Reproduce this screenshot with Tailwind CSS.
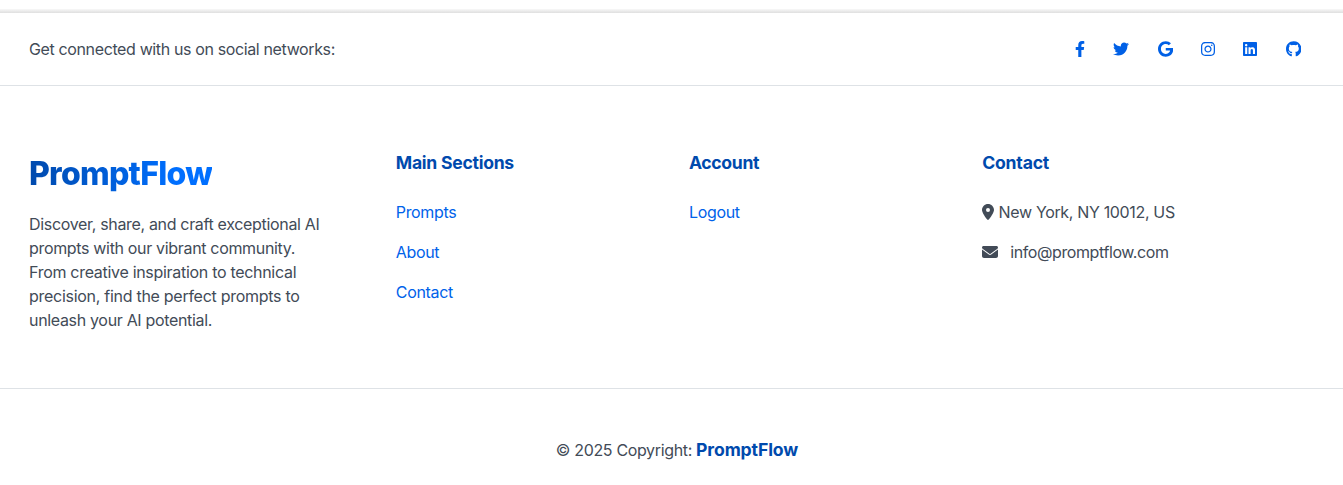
<!DOCTYPE html>
<html lang="en">
<head>
<meta charset="utf-8">
<title>PromptFlow</title>
<script src="https://cdn.jsdelivr.net/npm/@tailwindcss/browser@4"></script>
</head>
<body class="bg-white font-['Inter','Liberation_Sans',sans-serif] text-base leading-6 tracking-[-0.34px] text-[#424b57] h-[485px] overflow-hidden">
<div class="h-[13px] pt-[9px]"><div class="h-1 bg-linear-to-b from-[#f8f8f8] to-[#dfdfdf]"></div></div>
<footer>
  <section class="flex h-[73px] items-center justify-between border-b border-[#dee2e6] pl-[29px] pr-[41.8px]">
    <span class="whitespace-nowrap tracking-[-0.37px]">Get connected with us on social networks:</span>
    <div class="flex items-center gap-[28.25px] text-[#0060e6]">
      <a href="#" aria-label="Facebook"><svg class="h-4 w-[10px] fill-current" viewBox="0 0 320 512"><path d="M279.14 288l14.22-92.66h-88.91v-60.13c0-25.35 12.42-50.06 52.24-50.06h40.42V6.26S260.43 0 225.36 0c-73.22 0-121.08 44.38-121.08 124.72v70.62H22.89V288h81.39v224h100.17V288z"/></svg></a>
      <a href="#" aria-label="Twitter"><svg class="size-4 fill-current" viewBox="0 0 512 512"><path d="M459.37 151.716c.325 4.548.325 9.097.325 13.645 0 138.72-105.583 298.558-298.558 298.558-59.452 0-114.68-17.219-161.137-47.106 8.447.974 16.568 1.299 25.34 1.299 49.055 0 94.213-16.568 130.274-44.832-46.132-.975-84.792-31.188-98.112-72.772 6.498.974 12.995 1.624 19.818 1.624 9.421 0 18.843-1.3 27.614-3.573-48.081-9.747-84.143-51.98-84.143-102.985v-1.299c13.969 7.797 30.214 12.67 47.431 13.319-28.264-18.843-46.781-51.005-46.781-87.391 0-19.492 5.197-37.36 14.294-52.954 51.655 63.675 129.3 105.258 216.365 109.807-1.624-7.797-2.599-15.918-2.599-24.04 0-57.828 46.782-104.934 104.934-104.934 30.213 0 57.502 12.67 76.67 33.137 23.715-4.548 46.456-13.32 66.599-25.34-7.798 24.366-24.366 44.833-46.132 57.827 21.117-2.273 41.584-8.122 60.426-16.243-14.292 20.791-32.161 39.308-52.628 54.253z"/></svg></a>
      <a href="#" aria-label="Google"><svg class="h-4 w-[15.25px] fill-current" viewBox="0 0 488 512"><path d="M488 261.8C488 403.3 391.1 504 248 504 110.8 504 0 393.2 0 256S110.8 8 248 8c66.8 0 123 24.5 166.3 64.9l-67.5 64.9C258.5 52.6 94.3 116.6 94.3 256c0 86.5 69.1 156.6 153.7 156.6 98.2 0 135-70.4 140.8-106.9H248v-85.3h236.1c2.3 12.7 3.9 24.9 3.9 41.4z"/></svg></a>
      <a href="#" aria-label="Instagram"><svg class="h-4 w-[14px] fill-current" viewBox="0 0 448 512"><path d="M224.1 141c-63.6 0-114.9 51.3-114.9 114.9s51.3 114.9 114.9 114.9S339 319.5 339 255.9 287.7 141 224.1 141zm0 189.600c-41.100 0-74.700-33.500-74.700-74.700s33.500-74.700 74.700-74.700 74.700 33.500 74.700 74.700-33.600 74.700-74.700 74.700zm146.400-194.300c0 14.900-12 26.800-26.800 26.800-14.900 0-26.800-12-26.800-26.800s12-26.800 26.800-26.800 26.800 12 26.800 26.800zm76.100 27.200c-1.700-35.900-9.900-67.700-36.200-93.900-26.200-26.200-58-34.400-93.900-36.200-37-2.100-147.900-2.100-184.900 0-35.800 1.700-67.600 9.900-93.900 36.100s-34.400 58-36.200 93.900c-2.100 37-2.100 147.900 0 184.900 1.700 35.900 9.900 67.700 36.200 93.900s58 34.400 93.900 36.200c37 2.100 147.900 2.100 184.900 0 35.900-1.700 67.700-9.900 93.900-36.200 26.200-26.200 34.400-58 36.200-93.900 2.100-37 2.100-147.800 0-184.800zM398.800 388c-7.800 19.600-22.900 34.700-42.600 42.600-29.500 11.700-99.500 9-132.100 9s-102.700 2.600-132.100-9c-19.600-7.800-34.700-22.900-42.600-42.600-11.700-29.500-9-99.500-9-132.100s-2.600-102.700 9-132.100c7.800-19.600 22.900-34.700 42.600-42.600 29.500-11.700 99.500-9 132.100-9s102.700-2.600 132.100 9c19.600 7.800 34.700 22.900 42.600 42.600 11.700 29.500 9 99.500 9 132.100s2.700 102.700-9 132.100z"/></svg></a>
      <a href="#" aria-label="LinkedIn"><svg class="h-4 w-[14px] fill-current" viewBox="0 0 448 512"><path d="M416 32H31.900C14.300 32 0 46.500 0 64.300v383.400C0 465.500 14.300 480 31.900 480H416c17.600 0 32-14.500 32-32.300V64.300c0-17.800-14.400-32.300-32-32.300zM135.400 416H69V202.200h66.500V416zm-33.200-243c-21.300 0-38.500-17.300-38.500-38.500S80.900 96 102.200 96c21.200 0 38.500 17.300 38.500 38.500 0 21.300-17.200 38.500-38.500 38.500zm282.100 243h-66.400V312c0-24.800-.5-56.700-34.500-56.700-34.600 0-39.900 27-39.900 54.900V416h-66.400V202.200h63.700v29.200h.9c8.900-16.800 30.600-34.500 62.900-34.500 67.200 0 79.700 44.300 79.700 101.900V416z"/></svg></a>
      <a href="#" aria-label="GitHub"><svg class="h-4 w-[15.5px] fill-current" viewBox="0 0 496 512"><path d="M165.900 397.400c0 2-2.300 3.600-5.200 3.600-3.300.3-5.600-1.300-5.600-3.600 0-2 2.300-3.600 5.200-3.600 3-.3 5.600 1.300 5.600 3.600zM244.800 8C106.100 8 0 113.300 0 252c0 110.900 69.800 205.800 169.500 239.200 12.800 2.300 17.300-5.600 17.300-12.100 0-6.200-.3-40.400-.3-61.400 0 0-70 15-84.700-29.800 0 0-11.400-29.100-27.800-36.600 0 0-22.900-15.700 1.600-15.400 0 0 24.900 2 38.600 25.800 21.900 38.600 58.600 27.500 72.900 20.900 2.300-16 8.800-27.100 16-33.700-55.900-6.200-112.300-14.300-112.300-110.500 0-27.500 7.600-41.300 23.600-58.900-2.600-6.500-11.100-33.300 2.600-67.900 20.900-6.500 69 27 69 27 20-5.600 41.500-8.500 62.800-8.500s42.800 2.900 62.800 8.500c0 0 48.100-33.600 69-27 13.700 34.700 5.200 61.400 2.600 67.900 16 17.700 25.800 31.500 25.800 58.900 0 96.500-58.900 104.200-114.800 110.500 9.200 7.900 17 22.900 17 46.400 0 33.700-.3 75.400-.3 83.600 0 6.500 4.600 14.400 17.300 12.100C428.200 457.800 496 362.900 496 252 496 113.300 383.500 8 244.800 8z"/></svg></a>
    </div>
  </section>
  <section class="flex h-[303px] border-b border-[#dee2e6] pl-[29px] pt-[65px] whitespace-nowrap">
    <div class="w-[366.8px]">
      <h2 class="mt-[3px] w-fit bg-linear-to-r from-[#004aad] to-[#006fff] to-80% bg-clip-text text-[32px] leading-10 font-extrabold tracking-[-0.75px] text-transparent">PromptFlow</h2>
      <p class="mt-[18px] tracking-[-0.33px]">Discover, share, and craft exceptional AI<br>prompts with our vibrant community.<br><span class="tracking-[-0.3px]">From creative inspiration to technical</span><br><span class="tracking-[-0.28px]">precision, find the perfect prompts to</span><br>unleash your AI potential.</p>
    </div>
    <div class="w-[293.2px]">
      <h3 class="mb-[25px] font-bold text-[17.6px] tracking-[-0.27px] text-[#004aad]">Main Sections</h3>
      <ul class="flex flex-col gap-4 text-[#0062ea]">
        <li><a href="#">Prompts</a></li>
        <li><a href="#">About</a></li>
        <li><a href="#">Contact</a></li>
      </ul>
    </div>
    <div class="w-[293.2px]">
      <h3 class="mb-[25px] font-bold text-[17.6px] tracking-[-0.35px] text-[#004aad]">Account</h3>
      <a href="#" class="text-[#0062ea]">Logout</a>
    </div>
    <div>
      <h3 class="mb-[25px] font-bold text-[17.6px] tracking-[-0.2px] text-[#004aad]">Contact</h3>
      <p class="flex items-center gap-[4.4px]"><svg class="h-4 w-3 fill-current" viewBox="0 0 384 512"><path d="M215.700 499.200C267 435 384 279.400 384 192 384 86 298 0 192 0S0 86 0 192c0 87.400 117 243 168.300 307.200 12.300 15.300 35.100 15.300 47.400 0zM192 128a64 64 0 1 1 0 128 64 64 0 1 1 0-128z"/></svg><span>New York, NY 10012, US</span></p>
      <p class="mt-4 flex items-center gap-3 tracking-[-0.4px]"><svg class="size-4 fill-current" viewBox="0 0 512 512"><path d="M48 64C21.500 64 0 85.500 0 112c0 15.100 7.100 29.300 19.200 38.400L236.800 313.600c11.400 8.500 27 8.500 38.400 0L492.800 150.400c12.100-9.100 19.200-23.300 19.200-38.400 0-26.500-21.500-48-48-48H48zM0 176v208c0 35.300 28.700 64 64 64h384c35.300 0 64-28.700 64-64V176L294.400 339.200c-22.800 17.100-54 17.100-76.800 0L0 176z"/></svg><span>info@promptflow.com</span></p>
    </div>
  </section>
  <div class="flex items-center justify-center gap-[4px] pt-[49px] pl-[11px]"><span>© 2025 Copyright:</span><a href="#" class="font-bold text-[17.6px] tracking-[-0.1px] text-[#004aad]">PromptFlow</a></div>
</footer>
</body>
</html>
